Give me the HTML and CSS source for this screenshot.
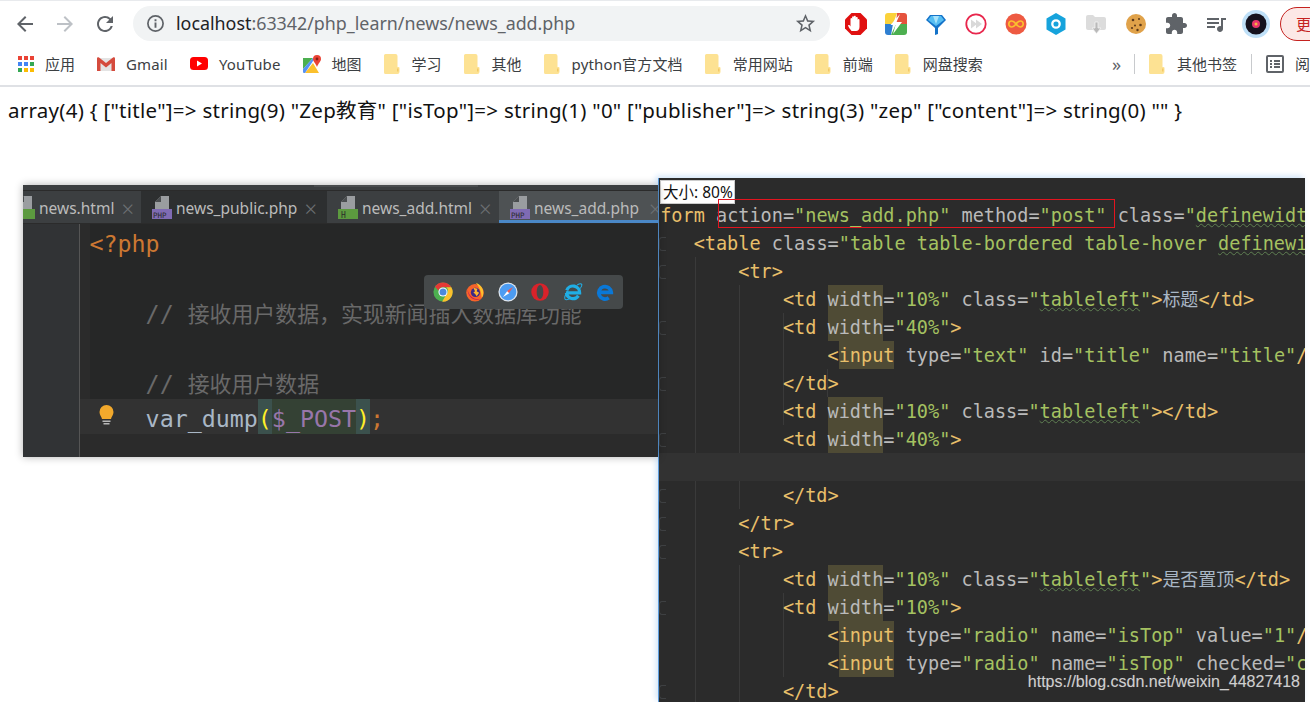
FILE: index.html
```html
<!DOCTYPE html>
<html lang="en">
<head>
  <meta charset="UTF-8" />
  <title>news_add.php</title>
  <link rel="stylesheet" href="styles.css">
</head>
<body>
  <svg class="defs" width="0" height="0">
    <symbol id="folder" viewBox="0 0 16 20">
      <path d="M1.5 0h10a2 2 0 0 1 2 2v11h1a1 1 0 0 1 1 1v4a2 2 0 0 1-2 2H1.5A1.5 1.5 0 0 1 0 18.500V1.500A1.500 1.500 0 0 1 1.500 0z" fill="#fde293"/>
      <path d="M13 14.500h1.500v3H13z" fill="#f3c969"/>
    </symbol>
    <symbol id="filepage" viewBox="0 0 20 14">
      <path d="M9 0h8v13H3V6z" fill="#9a9da0"/>
      <path d="M9 0v6H3z" fill="#4a4d4f"/>
    </symbol>
  </svg>

  <div class="toolbar">
    <div class="nav-btn">
      <svg viewBox="0 0 24 24" width="24" height="24"><path fill="#5f6368" d="M20 11H7.830l5.590-5.590L12 4l-8 8 8 8 1.410-1.410L7.830 13H20v-2z"/></svg>
    </div>
    <div class="nav-btn">
      <svg viewBox="0 0 24 24" width="24" height="24"><path fill="#bdc1c6" d="M4 11h12.170l-5.590-5.590L12 4l8 8-8 8-1.410-1.410L16.170 13H4v-2z"/></svg>
    </div>
    <div class="nav-btn">
      <svg viewBox="0 0 24 24" width="24" height="24"><path fill="#5f6368" d="M17.650 6.350A7.958 7.958 0 0 0 12 4c-4.420 0-7.990 3.580-7.990 8s3.570 8 7.990 8c3.730 0 6.840-2.550 7.730-6h-2.080A5.990 5.990 0 0 1 12 18c-3.310 0-6-2.690-6-6s2.690-6 6-6c1.660 0 3.140.690 4.220 1.780L13 11h7V4l-2.350 2.350z"/></svg>
    </div>
    <div class="omnibox">
      <svg viewBox="0 0 20 20" width="19" height="19">
        <circle cx="10" cy="10" r="8" fill="none" stroke="#5f6368" stroke-width="1.800"/>
        <path d="M9 9h2v5.500H9zM9 5.500h2v2H9z" fill="#5f6368"/>
      </svg>
      <div class="url"><span class="host">localhost</span>:63342/php_learn/news/news_add.php</div>
      <svg class="star" viewBox="0 0 24 24" width="23" height="23"><path fill="#5f6368" d="M22 9.240l-7.190-.620L12 2 9.190 8.630 2 9.240l5.460 4.730L5.820 21 12 17.270 18.180 21l-1.630-7.030L22 9.240zM12 15.400l-3.760 2.270 1-4.280-3.320-2.880 4.380-.380L12 6.100l1.710 4.040 4.380.380-3.320 2.880 1 4.280L12 15.400z"/></svg>
    </div>
    <div class="extensions">
      <div class="nav-btn">
        <svg viewBox="0 0 22 22" width="22" height="22">
          <path d="M6.500 0h9L22 6.500v9L15.500 22h-9L0 15.500v-9z" fill="#e01010"/>
          <path d="M6.500 18c-1.500-2-3-3.800-3.500-5.500 1-1 2 0 2.500 1V6c0-1.300 1.600-1.300 1.600 0V4.300c0-1.300 1.800-1.300 1.800 0v-.5c0-1.300 1.900-1.300 1.900 0v1c0-1.200 1.900-1.200 1.900 0 0 0 0 2.200 0 2.200 0-1.200 1.800-1.200 1.800 0V14c0 2.500-1.500 4-3.500 4z" fill="#fff"/>
        </svg>
      </div>
      <div class="nav-btn">
        <svg viewBox="0 0 22 22" width="22" height="22">
          <path d="M3 0h9L8 11H0V3a3 3 0 0 1 3-3z" fill="#fbd23a"/>
          <path d="M12 0h7a3 3 0 0 1 3 3v8H11z" fill="#e5533d"/>
          <path d="M0 11h8l-2 11H3a3 3 0 0 1-3-3z" fill="#2f7fd1"/>
          <path d="M11 11h11v8a3 3 0 0 1-3 3H6z" fill="#4caf50"/>
          <path d="M15 1L5.500 12h5L8 21l9-12h-5.500z" fill="#fff"/>
        </svg>
      </div>
      <div class="nav-btn">
        <svg viewBox="0 0 22 22" width="22" height="22">
          <path d="M5 2h12l4 5-8 8v6l-3 1v-7L1 7z" fill="#1473c9"/>
          <path d="M6 3h10l3 4-8 6-8-6z" fill="#55bdf2"/>
          <path d="M8 3h6l-3 8z" fill="#a8e3fb"/>
        </svg>
      </div>
      <div class="nav-btn">
        <svg viewBox="0 0 22 22" width="22" height="22">
          <circle cx="11" cy="11" r="9.700" fill="#fff" stroke="#e8264c" stroke-width="1.800"/>
          <path d="M6 6.500l6 4.500-6 4.500zM11 6.500l6 4.500-6 4.500z" fill="#d9d9d9"/>
        </svg>
      </div>
      <div class="nav-btn">
        <svg viewBox="0 0 22 22" width="22" height="22">
          <circle cx="11" cy="11" r="10.500" fill="#ee5a42"/>
          <path d="M11 11c-1.500-2-2.700-3-4.200-3a3 3 0 0 0 0 6c1.500 0 2.700-1 4.200-3s2.700-3 4.200-3a3 3 0 0 1 0 6c-1.500 0-2.700-1-4.200-3z" fill="none" stroke="#fbc02d" stroke-width="1.700"/>
        </svg>
      </div>
      <div class="nav-btn">
        <svg viewBox="0 0 22 22" width="22" height="22">
          <path d="M11 0l9.500 5.500v11L11 22l-9.500-5.500v-11z" fill="#16a3dc"/>
          <circle cx="11" cy="11" r="3.700" fill="none" stroke="#fff" stroke-width="2.300"/>
        </svg>
      </div>
      <div class="nav-btn">
        <svg viewBox="0 0 22 22" width="22" height="22">
          <path d="M1 4a2 2 0 0 1 2-2h5l2 2h9a2 2 0 0 1 2 2v9a2 2 0 0 1-2 2H3a2 2 0 0 1-2-2z" fill="#dcdcdc"/>
          <path d="M10 9h3v6h3l-4.500 5.500L7 15h3z" fill="#b9b9b9" stroke="#f4f4f4" stroke-width=".8"/>
        </svg>
      </div>
      <div class="nav-btn">
        <svg viewBox="0 0 22 22" width="22" height="22">
          <circle cx="11" cy="11" r="10" fill="#e0a24a"/>
          <circle cx="8" cy="7" r="1.300" fill="#5d3a1a"/>
          <circle cx="14" cy="6" r="1" fill="#5d3a1a"/>
          <circle cx="15.500" cy="12" r="1.300" fill="#5d3a1a"/>
          <circle cx="10" cy="12.500" r="1" fill="#5d3a1a"/>
          <circle cx="7" cy="15" r="1.100" fill="#5d3a1a"/>
          <circle cx="12.500" cy="17" r="1.200" fill="#5d3a1a"/>
        </svg>
      </div>
      <div class="nav-btn">
        <svg viewBox="0 0 24 24" width="24" height="24"><path fill="#5f6368" d="M20.500 11H19V7c0-1.100-.900-2-2-2h-4V3.500C13 2.120 11.880 1 10.500 1S8 2.120 8 3.500V5H4c-1.100 0-1.990.900-1.990 2v3.800H3.500c1.490 0 2.700 1.210 2.700 2.700s-1.210 2.700-2.700 2.700H2V20c0 1.100.900 2 2 2h3.800v-1.500c0-1.490 1.210-2.700 2.700-2.700 1.490 0 2.700 1.210 2.700 2.700V22H17c1.100 0 2-.900 2-2v-4h1.500c1.380 0 2.500-1.120 2.500-2.500S21.880 11 20.500 11z"/></svg>
      </div>
      <div class="nav-btn">
        <svg viewBox="0 0 24 24" width="24" height="24"><path fill="#5f6368" d="M15 6H3v2h12V6zm0 4H3v2h12v-2zM3 16h8v-2H3v2zM17 6v8.180c-.310-.110-.650-.180-1-.180-1.660 0-3 1.340-3 3s1.340 3 3 3 3-1.340 3-3V8h3V6h-5z"/></svg>
      </div>
      <div class="nav-btn">
        <svg viewBox="0 0 28 28" width="28" height="28">
          <circle cx="14" cy="14" r="14" fill="#bfe0f8"/>
          <circle cx="14" cy="14" r="10.500" fill="#15121e"/>
          <circle cx="14" cy="14" r="4" fill="#e8336b"/>
          <circle cx="14" cy="14" r="1.500" fill="#f5b342"/>
        </svg>
      </div>
    </div>
    <div class="update">更</div>
  </div>

  <div class="bookmarks">
    <div class="bm bm-first">
      <svg viewBox="0 0 18 18" width="18" height="18">
        <path fill="#ea4335" d="M1 1h4v4H1zM7 1h4v4H7zM13 1h4v4h-4z"/>
        <path fill="#4285f4" d="M1 7h4v4H1zM7 7h4v4H7z"/>
        <path fill="#34a853" d="M13 7h4v4h-4zM1 13h4v4H1z"/>
        <path fill="#fbbc04" d="M7 13h4v4H7zM13 13h4v4h-4z"/>
      </svg>
      <span>应用</span>
    </div>
    <div class="bm">
      <svg viewBox="0 0 18 14" width="18" height="14">
        <path fill="#e4e4e4" d="M1 1h16v13H1z"/>
        <path fill="#d54b3d" d="M0 1.500C0 .500 1 0 2 .500L9 6l7-5.500c1-.500 2 0 2 1V14h-3.500V6L9 10.500 3.500 6v8H0z"/>
      </svg>
      <span class="latin">Gmail</span>
    </div>
    <div class="bm">
      <svg viewBox="0 0 18 13" width="18" height="13">
        <rect width="18" height="13" rx="3.500" fill="#f00"/>
        <path d="M7 3.500L12 6.500 7 9.500z" fill="#fff"/>
      </svg>
      <span class="latin">YouTube</span>
    </div>
    <div class="bm">
      <svg viewBox="0 0 18 18" width="18" height="18">
        <path fill="#4caf50" d="M0 3h10L0 14z"/>
        <path fill="#fbc02d" d="M10 8l6 10H2z"/>
        <path fill="#4285f4" d="M0 14L10 3h2L2 18H1a1 1 0 0 1-1-1z" opacity=".9"/>
        <path fill="#ea4335" d="M14 0a4 4 0 0 1 4 4c0 2.500-2.500 4-4 8-1.500-4-4-5.500-4-8a4 4 0 0 1 4-4z"/>
        <circle cx="14" cy="4" r="1.400" fill="#8c1c13"/>
      </svg>
      <span>地图</span>
    </div>
    <div class="bm folder"><svg width="16" height="20"><use href="#folder"/></svg><span>学习</span></div>
    <div class="bm folder"><svg width="16" height="20"><use href="#folder"/></svg><span>其他</span></div>
    <div class="bm folder"><svg width="16" height="20"><use href="#folder"/></svg><span class="latin">python官方文档</span></div>
    <div class="bm folder"><svg width="16" height="20"><use href="#folder"/></svg><span>常用网站</span></div>
    <div class="bm folder"><svg width="16" height="20"><use href="#folder"/></svg><span>前端</span></div>
    <div class="bm folder"><svg width="16" height="20"><use href="#folder"/></svg><span>网盘搜索</span></div>
    <div class="bm-right">
      <div class="more">»</div>
      <div class="sep"></div>
      <div class="bm folder"><svg width="16" height="20"><use href="#folder"/></svg><span>其他书签</span></div>
      <div class="sep"></div>
      <div class="bm">
        <svg viewBox="0 0 18 18" width="18" height="18">
          <rect x="1" y="1" width="16" height="16" rx="1" fill="none" stroke="#5f6368" stroke-width="2"/>
          <path fill="#5f6368" d="M4 5h2v2H4zM8 5h6v2H8zM4 8h2v2H4zM8 8h6v2H8zM4 11h2v2H4zM8 11h6v2H8z"/>
        </svg>
        <span>阅</span>
      </div>
    </div>
  </div>

  <div class="dump">array(4) { ["title"]=&gt; string(9) "Zep教育" ["isTop"]=&gt; string(1) "0" ["publisher"]=&gt; string(3) "zep" ["content"]=&gt; string(0) "" }</div>

  <!-- pasted screenshots, free on the page -->
  <div class="shot-left">
    <div class="shot-head"></div>
    <div class="tabs">
      <div class="tab tab-first">
        <svg class="tab-icon" width="22" height="24" viewBox="0 0 22 24"><use href="#filepage" width="20" height="14"/><rect y="13" width="20" height="10" fill="#5c9a3f"/></svg>
        <span>news.html</span><i>×</i>
      </div>
      <div class="tab tab-dark">
        <svg class="tab-icon" width="22" height="24" viewBox="0 0 22 24"><use href="#filepage" width="20" height="14"/><rect y="13" width="20" height="10" fill="#7f6bb3"/><text x="1" y="22" class="icon-label php">PHP</text></svg>
        <span>news_public.php</span><i>×</i>
      </div>
      <div class="tab">
        <svg class="tab-icon" width="22" height="24" viewBox="0 0 22 24"><use href="#filepage" width="20" height="14"/><rect y="13" width="20" height="10" fill="#5c9a3f"/><text x="3" y="22" class="icon-label html">H</text></svg>
        <span>news_add.html</span><i>×</i>
      </div>
      <div class="tab tab-active">
        <svg class="tab-icon" width="22" height="24" viewBox="0 0 22 24"><use href="#filepage" width="20" height="14"/><rect y="13" width="20" height="10" fill="#7f6bb3"/><text x="1" y="22" class="icon-label php">PHP</text></svg>
        <span>news_add.php</span><i>×</i>
      </div>
    </div>
    <div class="editor-left">
      <div class="gutter-left"></div>
      <div class="code-left">
        <div class="row"><span class="kw">&lt;?php</span></div>
        <div class="row"></div>
        <div class="row comment">    // <span class="zh">接收用户数据，实现新闻插入数据库功能</span></div>
        <div class="row"></div>
        <div class="row comment">    // <span class="zh">接收用户数据</span></div>
        <div class="row row-current">    <span class="fn">var_dump</span><span class="brace">(</span><span class="var">$_POST</span><span class="brace">)</span><span class="kw">;</span></div>
      </div>
      <svg class="bulb" viewBox="0 0 14 22" width="15" height="22">
        <path d="M7 0a7 7 0 0 1 7 7c0 3-2 4.500-2.500 7h-9C2 11.500 0 10 0 7a7 7 0 0 1 7-7z" fill="#f2a92c"/>
        <path d="M3 15.500h8v1.500H3zM4 18h6v1.500H4z" fill="#b8b8b8"/>
      </svg>
    </div>
    <div class="browsers">
      <svg viewBox="0 0 24 24" width="20" height="20">
        <circle cx="12" cy="12" r="11.500" fill="#4caf50"/>
        <path d="M12 .5a11.500 11.500 0 0 1 10 5.800H12a5.700 5.700 0 0 0-5.500 4L2.300 5.700A11.500 11.500 0 0 1 12 .5z" fill="#e53935"/>
        <path d="M22 6.300A11.500 11.500 0 0 1 11 23.500l5-8.500a5.700 5.700 0 0 0 0-8.700z" fill="#fbc02d"/>
        <circle cx="12" cy="12" r="5.500" fill="#fff"/>
        <circle cx="12" cy="12" r="4.200" fill="#4a89dc"/>
      </svg>
      <svg viewBox="0 0 24 24" width="20" height="20">
        <circle cx="12" cy="13" r="10.500" fill="#f7632a"/>
        <path d="M3 8c0 10 8 16 16 12C11 22 4 17 3 8z" fill="#c2185b"/>
        <path d="M13 1c5 2 9 6 9 12 0 3-1 5-2 6 0-7-3-13-7-18z" fill="#fdc12d"/>
        <circle cx="12.500" cy="12.500" r="5.500" fill="#3c2a87"/>
        <path d="M10 7l5 1-1 3 3 2-3 4-2-3-2-1 2-2z" fill="#ffb52e"/>
      </svg>
      <svg viewBox="0 0 24 24" width="20" height="20">
        <circle cx="12" cy="12" r="11.500" fill="#dfe6ee"/>
        <circle cx="12" cy="12" r="10" fill="#4c9cf2"/>
        <path d="M18 6l-5 7.500-2.500-2.500z" fill="#f0574a"/>
        <path d="M6 18l5-7 2.500 2.500z" fill="#fff"/>
      </svg>
      <svg viewBox="0 0 24 24" width="20" height="20">
        <circle cx="12" cy="12" r="10.500" fill="#d9222a"/>
        <ellipse cx="12" cy="12" rx="4" ry="8.500" fill="#45494a"/>
      </svg>
      <svg viewBox="0 0 24 24" width="20" height="20">
        <path d="M3.500 13h16.500a8 8 0 0 0-15.500-3M18.500 16.500A8 8 0 0 1 4 13" fill="none" stroke="#20aee5" stroke-width="3.800"/>
        <path d="M17 3.500c3-1.500 5-1.500 5.500-.5.500 1.500-1 4-3.500 6.500M6 11c-3 4-4.500 8-3.500 9.500 1 1.200 4 .5 7-1.200" fill="none" stroke="#20aee5" stroke-width="1.300"/>
      </svg>
      <svg viewBox="0 0 24 24" width="20" height="20">
        <path d="M4.500 12.500h15a7.500 7.500 0 1 0-3 6.500" fill="none" stroke="#0a78d7" stroke-width="4.500"/>
      </svg>
    </div>
  </div>

  <div class="shot-right">
    <div class="guide guide-a"></div>
    <div class="guide guide-b"></div>
    <div class="guide guide-c"></div>
    <div class="guide guide-d"></div>
    <div class="guide guide-e"></div>
    <div class="guide guide-f"></div>
    <div class="guide guide-g"></div>
    <div class="code-right">
      <div class="line"> <span class="tag">form</span> <span class="attr">action=</span><span class="str">"news_add.php"</span> <span class="attr">method=</span><span class="str">"post"</span> <span class="attr">class=</span><span class="str">"<u>definewidth</u> m20"</span><span class="tag">&gt;</span></div>
      <div class="line fold">    <span class="tag">&lt;table</span> <span class="attr">class=</span><span class="str">"table table-bordered table-hover <u>definewidth</u> m10"</span><span class="tag">&gt;</span></div>
      <div class="line fold">        <span class="tag">&lt;tr&gt;</span></div>
      <div class="line">            <span class="tag">&lt;td</span> <span class="attr hit">width</span><span class="attr">=</span><span class="str">"10%"</span> <span class="attr">class=</span><span class="str">"<u>tableleft</u>"</span><span class="tag">&gt;</span><span class="txt">标题</span><span class="tag">&lt;/td&gt;</span></div>
      <div class="line fold">            <span class="tag">&lt;td</span> <span class="attr hit">width</span><span class="attr">=</span><span class="str">"40%"</span><span class="tag">&gt;</span></div>
      <div class="line">                <span class="tag">&lt;<span class="hit">input</span></span> <span class="attr">type=</span><span class="str">"text"</span> <span class="attr">id=</span><span class="str">"title"</span> <span class="attr">name=</span><span class="str">"title"</span><span class="tag">/&gt;</span></div>
      <div class="line fold">            <span class="tag">&lt;/td&gt;</span></div>
      <div class="line">            <span class="tag">&lt;td</span> <span class="attr hit">width</span><span class="attr">=</span><span class="str">"10%"</span> <span class="attr">class=</span><span class="str">"<u>tableleft</u>"</span><span class="tag">&gt;&lt;/td&gt;</span></div>
      <div class="line fold">            <span class="tag">&lt;td</span> <span class="attr hit">width</span><span class="attr">=</span><span class="str">"40%"</span><span class="tag">&gt;</span></div>
      <div class="line line-current"></div>
      <div class="line fold">            <span class="tag">&lt;/td&gt;</span></div>
      <div class="line fold">        <span class="tag">&lt;/tr&gt;</span></div>
      <div class="line fold">        <span class="tag">&lt;tr&gt;</span></div>
      <div class="line">            <span class="tag">&lt;td</span> <span class="attr hit">width</span><span class="attr">=</span><span class="str">"10%"</span> <span class="attr">class=</span><span class="str">"<u>tableleft</u>"</span><span class="tag">&gt;</span><span class="txt">是否置顶</span><span class="tag">&lt;/td&gt;</span></div>
      <div class="line fold">            <span class="tag">&lt;td</span> <span class="attr hit">width</span><span class="attr">=</span><span class="str">"10%"</span><span class="tag">&gt;</span></div>
      <div class="line">                <span class="tag">&lt;<span class="hit">input</span></span> <span class="attr">type=</span><span class="str">"radio"</span> <span class="attr">name=</span><span class="str">"isTop"</span> <span class="attr">value=</span><span class="str">"1"</span><span class="tag">/&gt;</span></div>
      <div class="line">                <span class="tag">&lt;<span class="hit">input</span></span> <span class="attr">type=</span><span class="str">"radio"</span> <span class="attr">name=</span><span class="str">"isTop"</span> <span class="attr">checked=</span><span class="str">"checked"</span> <span class="attr">value=</span><span class="str">"0"</span><span class="tag">/&gt;</span></div>
      <div class="line fold">            <span class="tag">&lt;/td&gt;</span></div>
    </div>
    <div class="size-tip">大小: 80%</div>
    <div class="red-box"></div>
  </div>

  <div class="watermark">https://blog.csdn.net/weixin_44827418</div>
</body>
</html>
```

FILE: styles.css
```css
* {
  box-sizing: border-box;
}

html, body {
  margin: 0;
  padding: 0;
  width: 1310px;
  height: 702px;
  overflow: hidden;
  background: #fff;
  font-family: "Noto Sans", "Noto Sans CJK SC", sans-serif;
}

.defs {
  position: absolute;
}

/* browser chrome */
.toolbar {
  display: flex;
  align-items: center;
  height: 47px;
  padding: 0 0 1px 5px;
  border-top: 1px solid #e8eaed;
  overflow: hidden;
}

.nav-btn {
  flex: 0 0 40px;
  height: 36px;
  display: flex;
  align-items: center;
  justify-content: center;
}

.omnibox {
  flex: 0 0 697px;
  height: 35px;
  margin-left: 8px;
  padding: 0 13px;
  display: flex;
  align-items: center;
  background: #f1f3f4;
  border-radius: 18px;
}

.url {
  margin: -2px 0 0 11px;
  font-size: 17.850px;
  color: #5f6368;
  white-space: nowrap;
}

.host {
  color: #202124;
}

.star {
  margin-left: auto;
}

.extensions {
  display: flex;
  flex: 0 0 auto;
  margin-left: 6px;
}

.update {
  flex: 0 0 70px;
  height: 34px;
  margin-left: 4px;
  padding-left: 15px;
  line-height: 32px;
  font-size: 15px;
  white-space: nowrap;
  color: #c5221f;
  background: #fce8e6;
  border: 1px solid #c5221f;
  border-radius: 17px;
}

.bookmarks {
  display: flex;
  align-items: center;
  gap: 22px;
  height: 40px;
  padding: 0 0 5px 17px;
  border-bottom: 2px solid #dfe1e5;
  font-size: 15px;
  color: #3c4043;
  white-space: nowrap;
  overflow: hidden;
}

.bm {
  display: flex;
  align-items: center;
  gap: 11px;
}

.bm-first {
  gap: 10px;
}

.latin {
  letter-spacing: 0.15px;
}

.folder {
  gap: 12px;
}

.bm-right {
  display: flex;
  align-items: center;
  gap: 14px;
  margin-left: auto;
  flex: 0 0 196px;
}

.more {
  width: 8px;
  text-align: right;
  color: #5f6368;
  font-size: 18px;
}

.sep {
  width: 1px;
  height: 20px;
  background: #c8cacd;
}

/* var_dump output */
.dump {
  margin: 9px 0 0 8px;
  font-size: 20.500px;
  letter-spacing: 0.27px;
  line-height: 28px;
  color: #111;
  white-space: nowrap;
}

/* left pasted editor */
.shot-left {
  position: absolute;
  z-index: 2;
  left: 23px;
  top: 185px;
  width: 635px;
  height: 272px;
  background: #2b2b2b;
  box-shadow: 0 0 8px rgba(0, 0, 0, 0.3);
  overflow: hidden;
}

.shot-head {
  height: 6px;
  background: #3c3f41;
  border-bottom: 1px solid #2b2b2b;
}

.shot-head::before {
  content: "";
  display: block;
  width: 164px;
  height: 2px;
  margin-left: 291px;
  background: #4a4d4f;
}

.tabs {
  display: flex;
  height: 33px;
  margin-left: -10px;
  background: #3c3f41;
  border-bottom: 1px solid #2b2b2b;
  font-size: 15.500px;
  color: #bbb;
  white-space: nowrap;
}

.tab {
  display: flex;
  align-items: center;
  flex: 0 0 172px;
  padding: 2px 0 0 11px;
}

.tab i {
  margin-left: 7px;
  font-style: normal;
  font-size: 22px;
  font-weight: 300;
  color: #6c7073;
}

.tab-first {
  flex-basis: 128px;
  padding-left: 2px;
}

.tab-dark {
  flex-basis: 186px;
  background: #2d2f30;
}

.tab-active {
  flex-basis: 170px;
  background: #4e5254;
  box-shadow: inset 0 -3px 0 #4a88c7;
}

.tab-active i {
  margin-left: 10px;
}

.tab-icon {
  margin-right: 2px;
  flex: 0 0 22px;
}

.icon-label {
  font-family: "DejaVu Sans Mono", monospace;
  font-size: 8px;
  fill: #2b2b2b;
}

.icon-label.php {
  font-size: 7.500px;
}

.editor-left {
  display: flex;
  position: relative;
  height: 233px;
}

.gutter-left {
  flex: 0 0 57px;
  background: #313335;
  border-right: 1px solid #555;
}

.code-left {
  flex: 1;
  font-family: "DejaVu Sans Mono", "Noto Sans CJK SC", monospace;
  font-size: 23.300px;
  color: #a9b7c6;
}

.row {
  height: 35px;
  line-height: 39px;
  margin-left: 9.500px;
  white-space: pre;
  background: #262727;
}

.row-current {
  margin-left: 0;
  padding-left: 9.500px;
  background: #323232;
}

.kw {
  color: #cc7832;
}

.comment {
  color: #696969;
}

.zh {
  font-size: 21.900px;
}

.fn {
  color: #a9b7c6;
}

.brace,
.var {
  display: inline-block;
  height: 35px;
  vertical-align: top;
}

.brace {
  color: #ffef28;
  background: #3b514d;
}

.var {
  color: #9876aa;
  background: #344134;
}

.bulb {
  position: absolute;
  left: 76px;
  top: 181px;
}

.browsers {
  position: absolute;
  left: 401px;
  top: 90px;
  width: 199px;
  height: 34px;
  display: flex;
  align-items: center;
  gap: 12.400px;
  padding-left: 9px;
  background: #45494a;
  border-radius: 4px;
}

/* right pasted editor */
.shot-right {
  position: absolute;
  left: 658px;
  top: 178px;
  width: 647px;
  height: 524px;
  padding-top: 23px;
  background: #2b2b2b;
  border-left: 1px solid #5b9bdc;
  box-shadow: -2px -2px 6px #cfe3f8;
  overflow: hidden;
}

.code-right {
  margin-left: -10px;
  font-family: "DejaVu Sans Mono", "Noto Sans CJK SC", monospace;
  font-size: 18.550px;
  color: #bababa;
}

.line {
  position: relative;
  height: 28px;
  line-height: 30px;
  white-space: pre;
  color: #e8bf6a;
}

.fold::before {
  content: "";
  position: absolute;
  left: 10px;
  top: 8px;
  width: 6px;
  height: 12px;
  border: 1px solid #3e4042;
  border-right: 0;
  border-radius: 3px 0 0 3px;
}

.line-current {
  background: #323232;
}

.tag {
  color: #e8bf6a;
}

.attr {
  color: #bababa;
}

.str {
  color: #a5c261;
}

.str u {
  text-decoration: underline wavy #5f7f52 1px;
}

.txt {
  font-size: 18px;
  color: #a9b7c6;
}

.hit {
  display: inline-block;
  height: 28px;
  vertical-align: top;
  background: #4f4b35;
}

.guide {
  position: absolute;
  width: 1px;
  background: #3a3a3a;
}

.guide-a {
  left: 36px;
  top: 79px;
  bottom: 0;
}

.guide-b {
  left: 80px;
  top: 107px;
  height: 224px;
}

.guide-c {
  left: 80px;
  top: 387px;
  bottom: 0;
}

.guide-d {
  left: 124px;
  top: 135px;
  height: 112px;
}

.guide-e {
  left: 124px;
  top: 275px;
  height: 28px;
}

.guide-f {
  left: 124px;
  top: 415px;
  height: 84px;
}

.guide-g {
  left: 168px;
  top: 191px;
  height: 28px;
}

.size-tip {
  position: absolute;
  left: 1px;
  top: 2px;
  width: 75px;
  height: 24px;
  padding-left: 2px;
  line-height: 23px;
  font-size: 15.500px;
  white-space: nowrap;
  color: #111;
  background: #fff;
  border: 1px solid #ccc;
}

.red-box {
  position: absolute;
  left: 59px;
  top: 21px;
  width: 397px;
  height: 29px;
  border: 1px solid #e3141f;
}

.watermark {
  position: absolute;
  z-index: 3;
  right: 10px;
  top: 672px;
  font-family: "Liberation Sans", sans-serif;
  font-size: 16px;
  line-height: 20px;
  color: #cfcfcf;
  text-shadow: 0 0 1px #555;
}
```
